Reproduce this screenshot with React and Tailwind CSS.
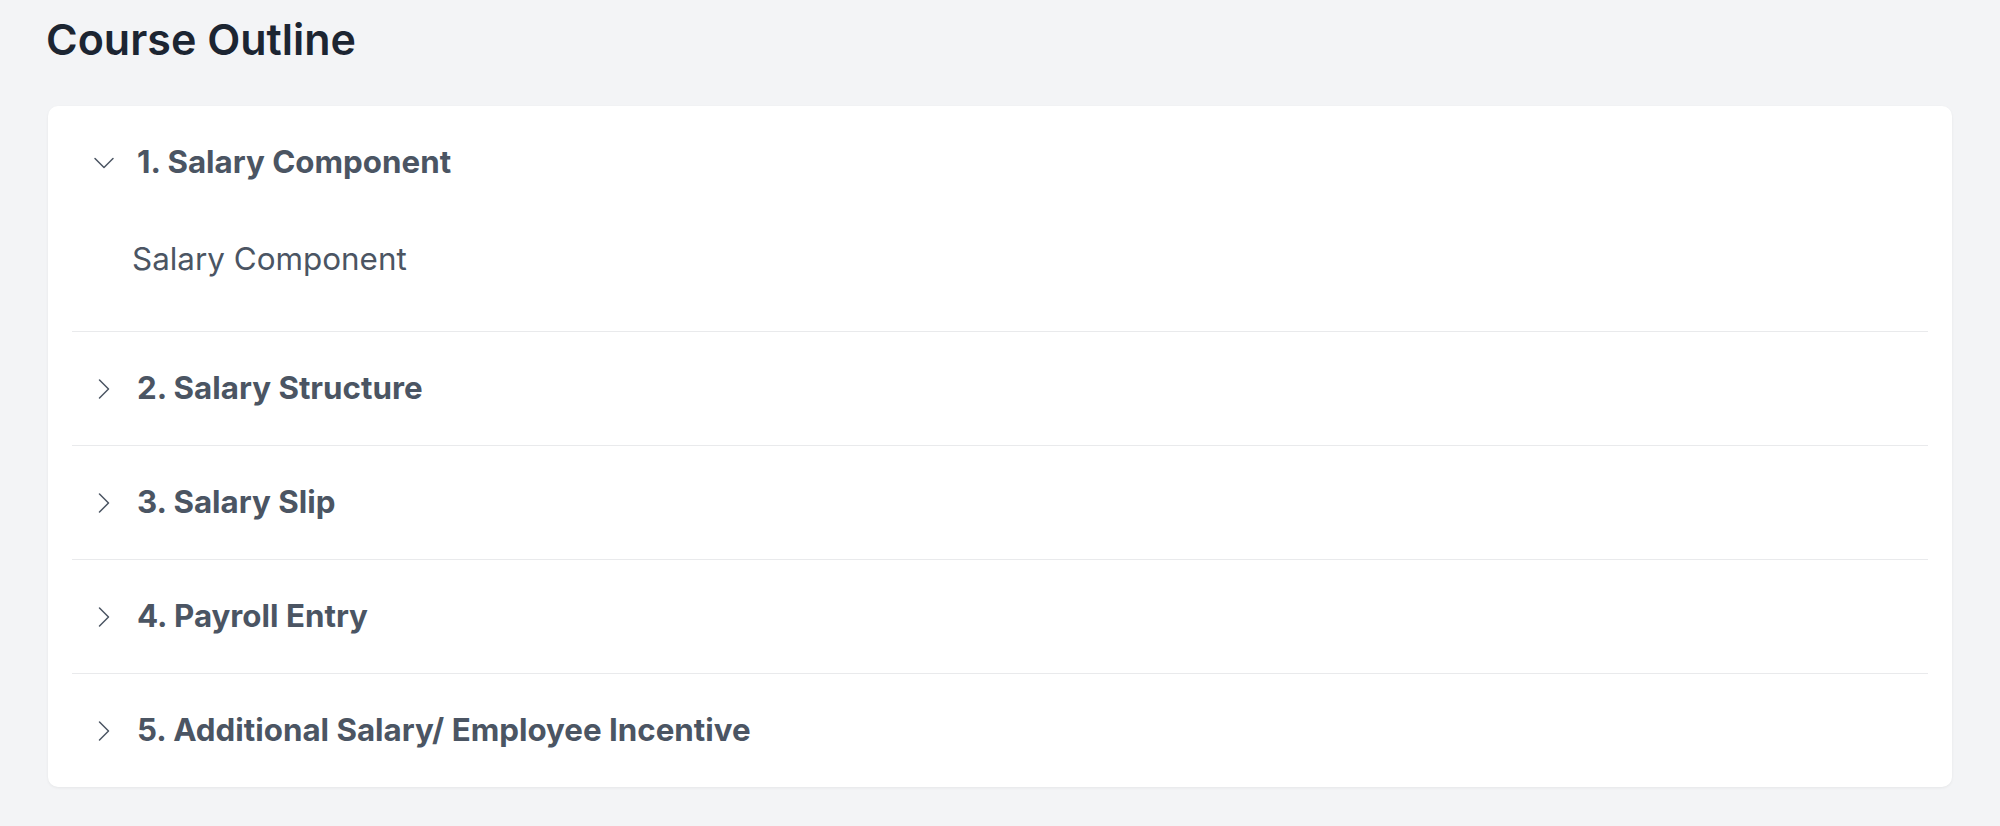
import { ChevronDown, ChevronRight } from 'lucide-react'

const sections = [
  { title: '1. Salary Component', open: true, body: 'Salary Component' },
  { title: '2. Salary Structure' },
  { title: '3. Salary Slip' },
  { title: '4. Payroll Entry' },
  { title: '5. Additional Salary/ Employee Incentive' },
]

export default function App() {
  return (
    <div className="min-h-[826px] bg-[#f3f4f6] px-12 pt-[14px] pb-10 font-['Inter',sans-serif]">
      <h1 className="-ml-[2px] text-[43px] leading-[51px] font-semibold text-[#1c2532]">Course Outline</h1>
      <div className="mt-[41px] bg-white rounded-[10px] shadow-[0_1px_3px_rgba(0,0,0,0.06)] px-6">
        {sections.map((s, i) => (
          <div key={s.title} className={i < sections.length - 1 ? 'border-b border-[#e9eaec]' : ''}>
            <div className="h-[113px] flex items-center pl-[14px] gap-[15px] text-[#4b5563]">
              {s.open ? (
                <ChevronDown size={36} strokeWidth={1} />
              ) : (
                <ChevronRight size={36} strokeWidth={1} />
              )}
              <span className="text-[31.3px] font-bold">{s.title}</span>
            </div>
            {s.open && (
              <div className="pl-[60px] pt-[18px] pb-[49px] text-[31.4px] leading-[45px] text-[#4b5563]">
                {s.body}
              </div>
            )}
          </div>
        ))}
      </div>
    </div>
  )
}
